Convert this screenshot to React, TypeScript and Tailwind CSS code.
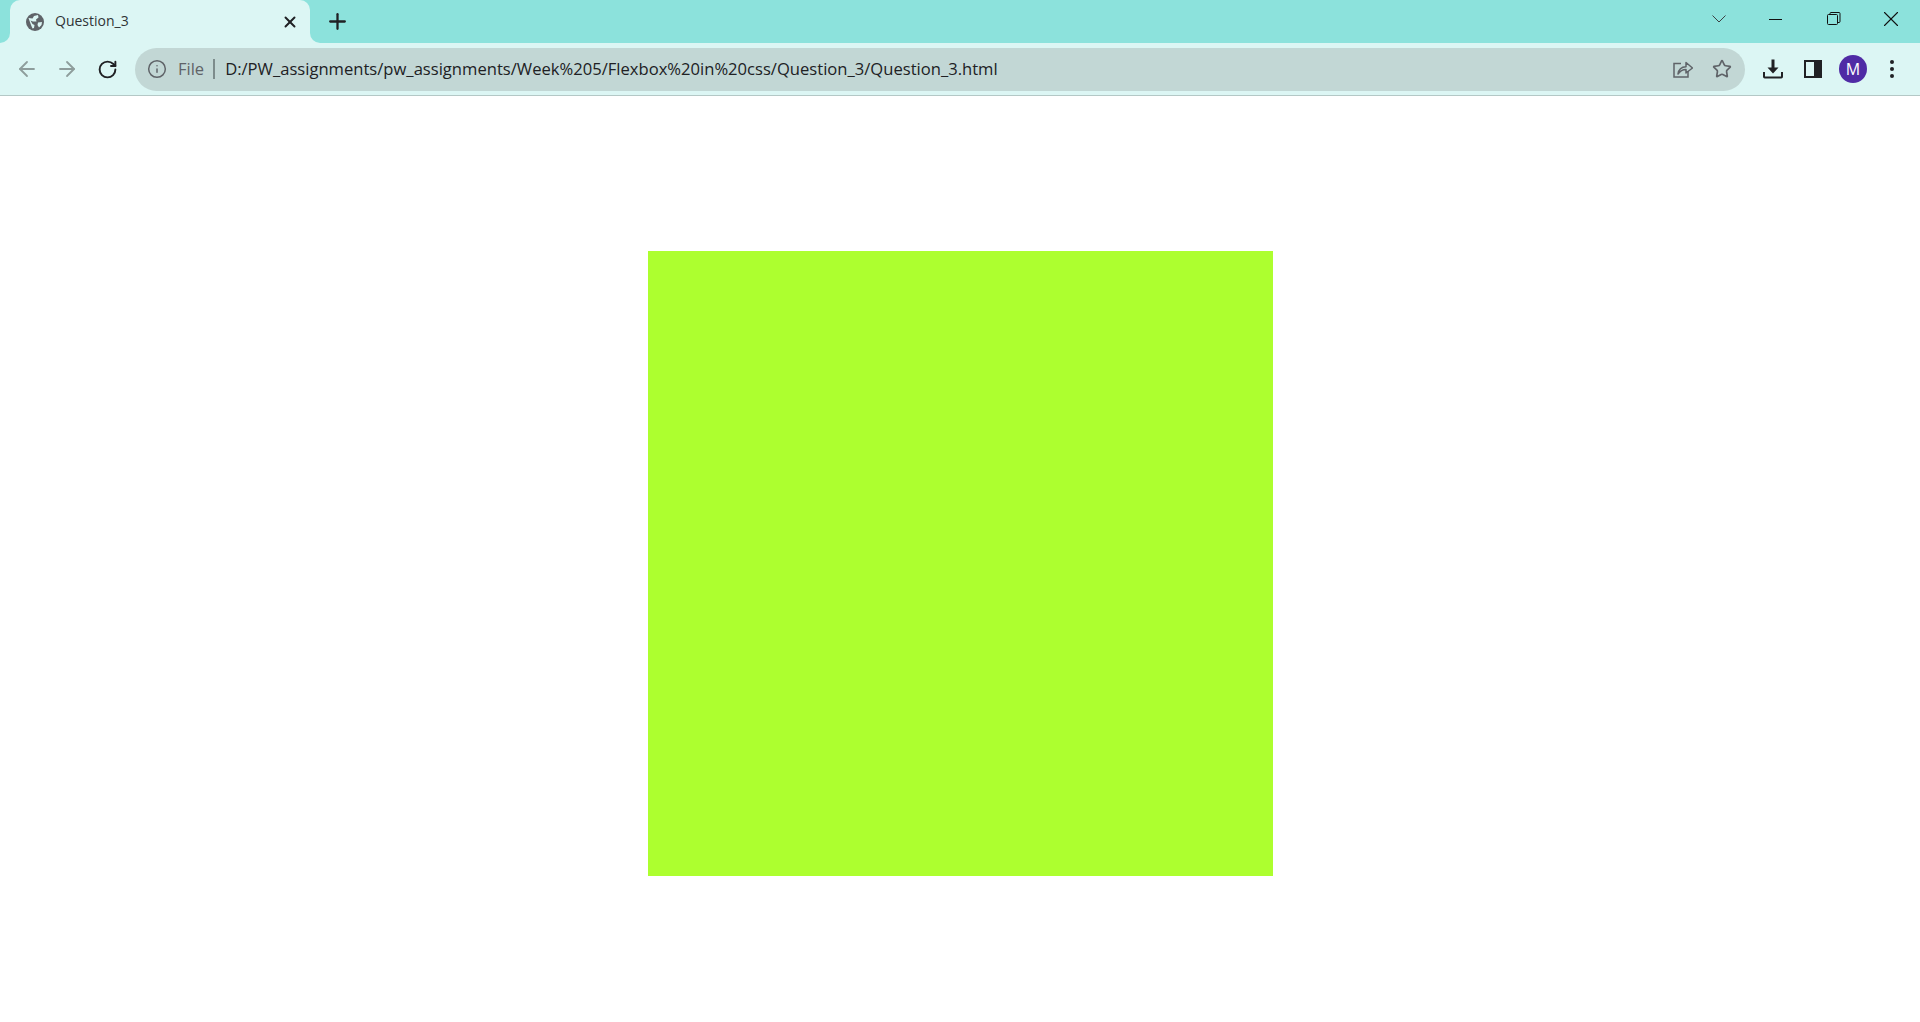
import { ArrowLeft, ArrowRight, RotateCw, Plus, X, Star, Info } from "lucide-react";

const font = { fontFamily: '"Open Sans", "Noto Sans", sans-serif' };

function GlobeIcon() {
  return (
    <svg width="18" height="18" viewBox="0 0 18 18" aria-hidden>
      <circle cx="9" cy="9" r="9" fill="#5f6368" />
      <path
        d="M2.500 5 L6.500 5.500 L8 3 L12 2 L12.500 4.500 L10 6.500 L10.500 8.500 L7 8.500 L4.500 7.500 L6.500 11 L8.500 12 L8 15 L6.500 15.500 L5 12 Z M12 9.500 L16 9 L15.500 12 L13 14.500 L11.500 12 Z"
        fill="#dcf6f4"
      />
    </svg>
  );
}

function ShareIcon() {
  return (
    <svg width="20" height="20" viewBox="0 0 20 20" fill="none" stroke="#5f6368" strokeWidth="1.500" aria-hidden>
      <path d="M8 4.500H1V18H15V12" />
      <path d="M5 15c.6-4.600 3.400-7.100 8-7.300V3.500L19.500 9 13 14v-3.600c-3.300 0-5.900 1.400-8 4.600Z" strokeLinejoin="round" />
    </svg>
  );
}

function DownloadIcon() {
  return (
    <svg width="20" height="20" viewBox="0 0 20 20" aria-hidden>
      <path d="M8.500 0.500h3v8h4L10 14.500 4.500 8.500h4Z" fill="#202124" />
      <path d="M1 13v4.700c0 .4.300.8.800.8h16.400c.5 0 .8-.4.800-.8V13" fill="none" stroke="#202124" strokeWidth="2" />
    </svg>
  );
}

function SidePanelIcon() {
  return (
    <svg width="18" height="18" viewBox="0 0 18 18" aria-hidden>
      <rect width="18" height="18" fill="#202124" />
      <rect x="2" y="2" width="8" height="14" fill="#dcf6f4" />
    </svg>
  );
}

function RestoreIcon() {
  return (
    <svg width="14" height="14" viewBox="0 0 14 14" fill="none" stroke="#111" strokeWidth="1" aria-hidden>
      <rect x="0.500" y="2.500" width="10" height="10" rx="1" />
      <path d="M3 2.500V1.500a1 1 0 0 1 1-1h8a1 1 0 0 1 1 1v8a1 1 0 0 1-1 1h-1.500" />
    </svg>
  );
}

export default function App() {
  return (
    <div className="min-h-[1022px] bg-white flex flex-col" style={font}>
      <div className="h-[43px] bg-[#8ce2dc] flex items-start pl-[10px]">
        <div className="relative w-[300px] h-[43px] mr-[15px] bg-[#dcf6f4] rounded-t-[10px] flex items-center pl-[16px] pr-[11px]">
          <span className="absolute left-[-10px] bottom-0 w-[10px] h-[10px] bg-[#dcf6f4]">
            <span className="block w-full h-full bg-[#8ce2dc] rounded-br-[10px]" />
          </span>
          <span className="absolute right-[-10px] bottom-0 w-[10px] h-[10px] bg-[#dcf6f4]">
            <span className="block w-full h-full bg-[#8ce2dc] rounded-bl-[10px]" />
          </span>
          <GlobeIcon />
          <span className="ml-[11px] mb-[1px] flex-1 text-[14px] text-[#303336] leading-none">Question_3</span>
          <X size={18} strokeWidth={2.6} color="#202124" />
        </div>
        <Plus className="mt-[9px]" size={25} strokeWidth={2.2} color="#202124" />
        <div className="flex-1" />
        <div className="flex items-center h-[38px] text-[#111]">
          <svg width="14" height="8" viewBox="0 0 14 8" fill="none" stroke="#3c4043" strokeWidth="1" className="mr-[43px]" aria-hidden>
            <path d="M0.500 0.500 7 7l6.500-6.500" />
          </svg>
          <div className="w-[13px] h-px bg-[#111] mr-[45px]" />
          <div className="mr-[37px] flex"><RestoreIcon /></div>
          <X size={26} strokeWidth={1} color="#111" className="mr-[16px]" />
        </div>
      </div>

      <div className="h-[53px] bg-[#dcf6f4] border-b border-[#b4c8c6] flex items-center pl-[15px] pr-[26px]">
        <ArrowLeft size={24} strokeWidth={1.8} color="#8e9d9c" />
        <ArrowRight size={24} strokeWidth={1.8} color="#8e9d9c" className="ml-[16px]" />
        <RotateCw size={21} strokeWidth={2.2} color="#202124" className="ml-[18px]" />
        <div className="ml-[17px] h-[43px] flex-1 rounded-full bg-[#c2d7d5] flex items-center pl-[12px] pr-[13px]">
          <Info size={20} strokeWidth={1.8} color="#5f6368" />
          <span className="ml-[11px] mt-[1px] text-[16.500px] text-[#5f6368] leading-none">File</span>
          <span className="ml-[9px] w-[2px] h-[20px] bg-[#7d8c8c]" />
          <span className="ml-[10px] mt-[1px] flex-1 text-[16.600px] text-[#202124] leading-none">
            D:/PW_assignments/pw_assignments/Week%205/Flexbox%20in%20css/Question_3/Question_3.html
          </span>
          <ShareIcon />
          <Star size={20} strokeWidth={2} color="#5f6368" className="ml-[19px]" />
        </div>
        <div className="ml-[18px] flex"><DownloadIcon /></div>
        <div className="ml-[21px] flex"><SidePanelIcon /></div>
        <div className="ml-[17px] w-[28px] h-[28px] rounded-full bg-[#4f2ba5] text-white flex items-center justify-center text-[16px]">
          M
        </div>
        <div className="ml-[23px] flex flex-col gap-[3px]">
          <span className="w-[4px] h-[4px] rounded-full bg-[#202124]" />
          <span className="w-[4px] h-[4px] rounded-full bg-[#202124]" />
          <span className="w-[4px] h-[4px] rounded-full bg-[#202124]" />
        </div>
      </div>

      <div className="flex justify-center pt-[155px]">
        <div className="w-[625px] h-[625px] bg-[#adff2f]" />
      </div>
    </div>
  );
}
